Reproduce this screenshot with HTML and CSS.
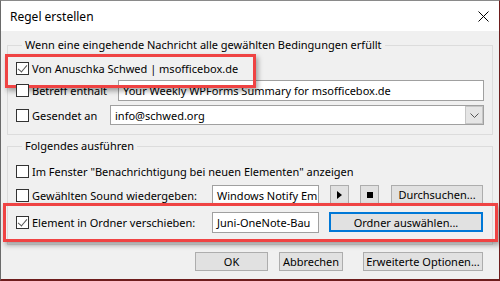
FILE: index.html
```html
<!DOCTYPE html>
<html lang="de">
<head>
    <meta charset="UTF-8">
    <meta name="viewport" content="width=device-width, initial-scale=1.0">
    <title>Regel erstellen</title>
    <link rel="stylesheet" href="styles.css">
</head>
<body>
    <div class="window">
        <div class="titlebar">
            <span class="title">Regel erstellen</span>
            <svg class="close" width="11" height="11" viewBox="0 0 11 11">
                <path d="M0.5 0.5 L10.5 10.5 M10.5 0.5 L0.5 10.5" stroke="#000" stroke-width="1" fill="none"/>
            </svg>
        </div>

        <div class="content">
            <fieldset class="group group-conditions">
                <legend>Wenn eine eingehende Nachricht alle gewählten Bedingungen erfüllt</legend>
                <div class="row marked marked-from">
                    <span class="check checked"></span>
                    <span class="label">Von Anuschka Schwed | msofficebox.de</span>
                </div>
                <div class="row">
                    <span class="check"></span>
                    <span class="label label-subject">Betreff enthält</span>
                    <div class="field">Your Weekly WPForms Summary for msofficebox.de</div>
                </div>
                <div class="row row-to">
                    <span class="check"></span>
                    <span class="label label-to">Gesendet an</span>
                    <div class="field combo">
                        <span>info@schwed.org</span>
                        <span class="drop">
                            <svg width="9" height="5" viewBox="0 0 9 5"><path d="M0.5 0.5 L4.5 4.5 L8.5 0.5" stroke="#555" fill="none"/></svg>
                        </span>
                    </div>
                </div>
            </fieldset>

            <fieldset class="group group-actions">
                <legend>Folgendes ausführen</legend>
                <div class="row">
                    <span class="check"></span>
                    <span class="label">Im Fenster "Benachrichtigung bei neuen Elementen" anzeigen</span>
                </div>
                <div class="row row-sound">
                    <span class="check"></span>
                    <span class="label label-action">Gewählten Sound wiedergeben:</span>
                    <div class="field field-short">Windows Notify Em</div>
                    <button class="btn btn-icon btn-play"><span class="play"></span></button>
                    <button class="btn btn-icon btn-stop"><span class="stop"></span></button>
                    <button class="btn btn-browse">Durchsuchen...</button>
                </div>
                <div class="row row-move marked marked-move">
                    <span class="check checked"></span>
                    <span class="label label-action">Element in Ordner verschieben:</span>
                    <div class="field field-short">Juni-OneNote-Bau</div>
                    <button class="btn btn-folder">Ordner auswählen...</button>
                </div>
            </fieldset>

            <div class="buttons">
                <button class="btn btn-ok">OK</button>
                <button class="btn btn-cancel">Abbrechen</button>
                <button class="btn btn-more">Erweiterte Optionen...</button>
            </div>
        </div>
    </div>
</body>
</html>
```

FILE: styles.css
```css
*{
    margin: 0;
    padding: 0;
    box-sizing: border-box;
}
body{
    width: 500px;
    height: 281px;
    overflow: hidden;
    font-family: "Segoe UI", "Noto Sans", sans-serif;
    font-size: 11px;
    color: #000;
}
.window{
    width: 500px;
    height: 281px;
    background-color: #f0f0f0;
    border-top: 1px solid #8a8a8a;
    border-left: 1px solid #6a6a6a;
    border-right: 1px solid #6e1d1d;
    border-bottom: 2px solid #6e1d1d;
    display: flex;
    flex-direction: column;
}
.titlebar{
    height: 30px;
    background-color: #fff;
    display: flex;
    align-items: center;
    justify-content: space-between;
    padding: 0 10px 0 9px;
    flex-shrink: 0;
}
.title{
    font-size: 12px;
}
.close{
    display: block;
    margin-top: 1px;
}
.content{
    padding: 6px 6px 0 6px;
    display: flex;
    flex-direction: column;
}

/* group boxes */
.group{
    border: 1px solid #dcdcdc;
    padding: 0 8px 0 8px;
}
.group legend{
    margin-left: 6px;
    padding: 0 3px;
    line-height: 16px;
}
.group-conditions{
    padding-top: 4px;
    padding-bottom: 8px;
}
.group-actions{
    margin-top: 3px;
    padding-top: 6px;
    padding-bottom: 11px;
}

.row{
    display: flex;
    align-items: center;
    height: 22px;
}
.row-to{
    margin-top: 3px;
}
.row-sound{
    margin-top: 2px;
}
.row.row-move{
    margin-top: 5px;
}

.check{
    width: 13px;
    height: 13px;
    border: 1px solid #333;
    background-color: #fff;
    flex-shrink: 0;
    margin-right: 3px;
    position: relative;
}
.check.checked::after{
    content: "";
    position: absolute;
    left: 3px;
    top: 0px;
    width: 4px;
    height: 8px;
    border-right: 1.5px solid #555;
    border-bottom: 1.5px solid #555;
    transform: rotate(40deg);
}
.label{
    white-space: nowrap;
    flex-shrink: 0;
}
.label-subject{
    width: 86px;
}
.label-to{
    width: 78px;
}
.label-action{
    width: 180px;
}

.field{
    height: 21px;
    border: 1px solid #a0a0a0;
    background-color: #fff;
    padding: 0 4px;
    line-height: 19px;
    flex: 1;
    white-space: nowrap;
    overflow: hidden;
}
.combo{
    height: 20px;
    display: flex;
    justify-content: space-between;
    padding-right: 0;
}
.drop{
    width: 18px;
    height: 18px;
    background-color: #e5e5e5;
    border: 1px solid #c6c6c6;
    display: flex;
    align-items: center;
    justify-content: center;
}
.field-short{
    flex: 0 0 107px;
}

.btn{
    font-family: inherit;
    font-size: 11px;
    color: #000;
    background-color: #e1e1e1;
    border: 1px solid #adadad;
    height: 20px;
    line-height: 18px;
    flex-shrink: 0;
    white-space: nowrap;
}
.btn-icon{
    width: 19px;
    display: flex;
    align-items: center;
    justify-content: center;
}
.btn-play{
    margin-left: 11px;
}
.btn-stop{
    margin-left: 11px;
}
.btn-browse{
    width: 92px;
    margin-left: 12px;
}
.play{
    width: 0;
    height: 0;
    border-top: 4px solid transparent;
    border-bottom: 4px solid transparent;
    border-left: 5px solid #000;
}
.stop{
    width: 6px;
    height: 6px;
    background-color: #000;
}
.btn-folder{
    width: 154px;
    margin-left: 10px;
    border: 2px solid #0078d7;
    height: 20px;
}

.buttons{
    display: flex;
    justify-content: flex-end;
    margin-top: 7px;
    padding-right: 10px;
}
.buttons .btn{
    height: 19px;
    line-height: 17px;
}
.btn-ok{
    width: 73px;
}
.btn-cancel{
    width: 64px;
    margin-left: 11px;
}
.btn-more{
    width: 120px;
    margin-left: 20px;
}

/* red annotation frames drawn over the rows */
.marked{
    position: relative;
}
.marked::before{
    content: "";
    position: absolute;
    border: 3px solid #ef4343;
    box-shadow: 2px 3px 5px rgba(0, 0, 0, 0.35);
    pointer-events: none;
}
.marked-from::before{
    left: -11px;
    width: 245px;
    top: -3px;
    height: 28px;
}
.marked-move::before{
    left: -13px;
    right: -14px;
    top: -8px;
    bottom: -9px;
}
```
